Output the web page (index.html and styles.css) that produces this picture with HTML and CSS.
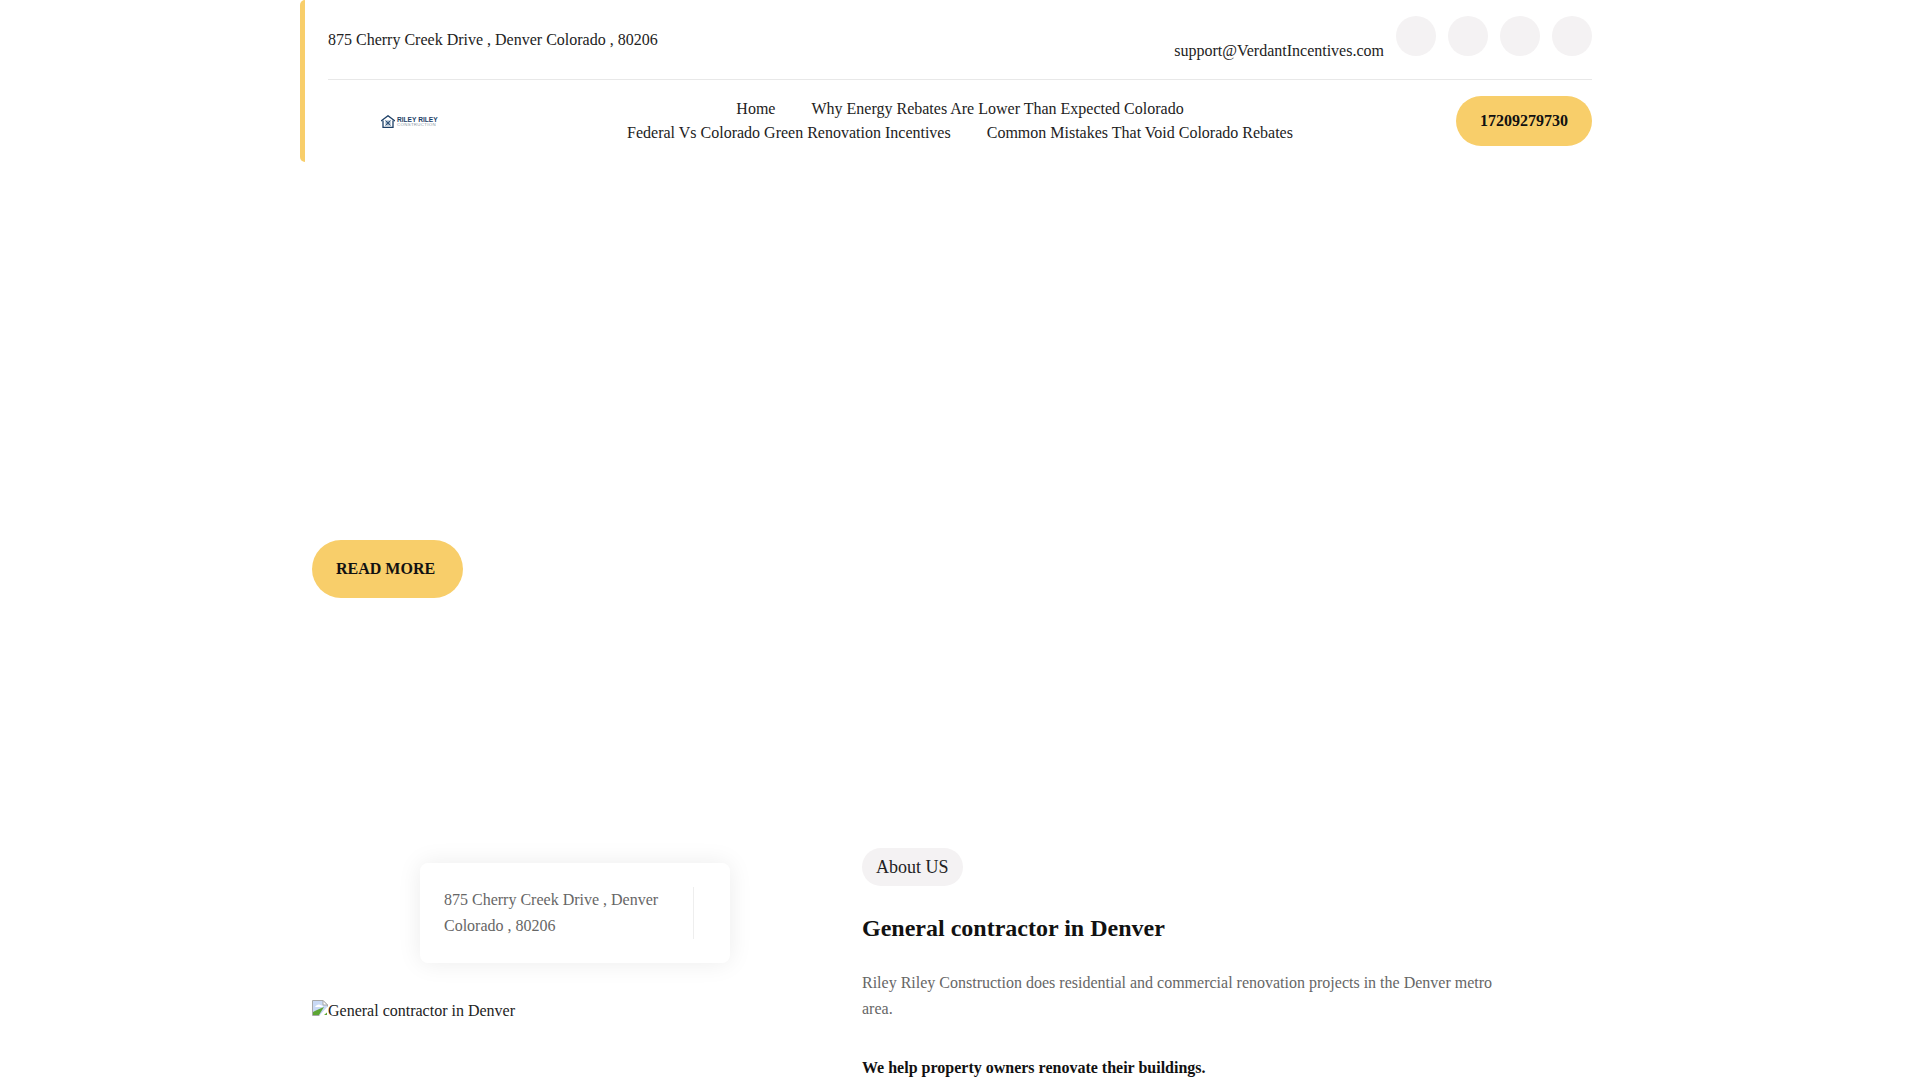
FILE: index.html
```html
<!DOCTYPE html>
<html lang="en">
<head>
  <meta charset="UTF-8">
  <title>Riley Riley Construction</title>
  <link rel="stylesheet" href="styles.css">
</head>
<body>
  <header class="header">
    <div class="topbar">
      <p class="address">875 Cherry Creek Drive , Denver Colorado , 80206</p>
      <div class="contact">
        <a class="email" href="#">support@VerdantIncentives.com</a>
        <span class="social"></span>
        <span class="social"></span>
        <span class="social"></span>
        <span class="social"></span>
      </div>
    </div>
    <div class="mainbar">
      <div class="logo">
        <svg width="14" height="13" viewBox="0 0 14 13"><path d="M0 6 7 .8 14 6" fill="none" stroke="#1c3f66" stroke-width="1.4"/><path d="M2 5.500V12.400H12V5.500" fill="none" stroke="#1c3f66" stroke-width="1.300"/><path d="M4.500 5.500h5v5h-5z" fill="#8fa6bd"/><path d="M4.500 10.500 9.500 5.500M4.500 5.500l5 5" stroke="#1c3f66" stroke-width=".8"/></svg>
        <div class="logo-text"><b>RILEY RILEY</b><span>CONSTRUCTION</span></div>
      </div>
      <nav class="nav">
        <a href="#">Home</a>
        <a href="#">Why Energy Rebates Are Lower Than Expected Colorado</a>
        <a href="#">Federal Vs Colorado Green Renovation Incentives</a>
        <a href="#">Common Mistakes That Void Colorado Rebates</a>
      </nav>
      <a class="phone" href="#">17209279730</a>
    </div>
  </header>

  <section class="hero">
    <a class="read-more" href="#">READ MORE</a>
  </section>

  <section class="about">
    <div class="about-left">
      <div class="address-card">
        <p>875 Cherry Creek Drive , Denver Colorado , 80206</p>
        <span class="card-side"></span>
      </div>
      <div class="broken-img">
        <svg class="broken-icon" width="16" height="16" viewBox="0 0 16 16"><path d="M.5.5h10.500l4.500 4.500v10.500H.500z" fill="#c9d9f5" stroke="#a8a8a8"/><path d="M11 .5v4.500h4.500z" fill="#fff" stroke="#a8a8a8"/><path d="M3 7c1-2 4-3 5-2 2 0 3 1 3 2z" fill="#fff"/><path d="M1 15v-3c3-2 7-3 11-5l-5 8z" fill="#5da633"/><path d="M7 16 16 6v10z" fill="#fff"/><path d="M12 15l3-2.500V15z" fill="#5da633"/></svg>
        <span>General contractor in Denver</span>
      </div>
    </div>
    <div class="about-right">
      <span class="tag">About US</span>
      <h2>General contractor in Denver</h2>
      <p class="lead">Riley Riley Construction does residential and commercial renovation projects in the Denver metro area.</p>
      <p class="strong">We help property owners renovate their buildings.</p>
    </div>
  </section>
</body>
</html>
```

FILE: styles.css
```css
html, body { margin: 0; height: 1080px; overflow: hidden; }
body { font-family: "Liberation Serif", "Times New Roman", serif; font-size: 16px; color: #222; background: #fff; }
p { margin: 0; }
a { color: inherit; text-decoration: none; }

.header { width: 1264px; height: 162px; margin-left: 300px; padding-left: 23px; border-left: 5px solid #f8ce6a; border-radius: 5px; }
.topbar { display: flex; justify-content: space-between; height: 79px; border-bottom: 1px solid #e8e8e8; }
.address { padding-top: 30px; line-height: 20px; }
.contact { display: flex; align-items: flex-start; gap: 12px; padding-top: 16px; }
.email { padding-top: 25px; line-height: 20px; }
.social { width: 40px; height: 40px; border-radius: 50%; background: #f4f2f3; }

.mainbar { display: flex; align-items: center; height: 82px; }
.logo { display: flex; align-items: center; gap: 2px; width: 282px; padding-left: 53px; box-sizing: border-box; }
.logo-text { display: flex; flex-direction: column; font-family: "Liberation Sans", Arial, sans-serif; color: #1c3f66; font-size: 6.6px; line-height: 7px; }
.logo-text span { font-size: 4.400px; line-height: 4px; letter-spacing: .3px; color: #8a97a6; }
.nav { width: 700px; display: flex; flex-wrap: wrap; justify-content: center; gap: 4px 36px; line-height: 20px; }
.phone { margin-left: auto; padding: 0 24px; height: 50px; line-height: 50px; border-radius: 25px; background: #f8ce6a; color: #111; font-weight: bold; }

.hero { height: 306px; margin-left: 312px; padding-top: 378px; }
.read-more { display: inline-block; height: 58px; line-height: 58px; padding: 0 28px 0 24px; border-radius: 29px; background: #f8ce6a; color: #111; font-weight: bold; }

.about { display: flex; margin-left: 312px; padding-top: 2px; }
.about-left { width: 550px; }
.address-card { display: flex; align-items: center; width: 310px; height: 100px; margin: 15px 0 0 108px; padding-left: 24px; box-sizing: border-box; background: #fff; border-radius: 8px; box-shadow: 0 0 25px rgba(0,0,0,0.08); color: #666; line-height: 26px; }
.address-card p { width: 226px; }
.card-side { width: 1px; height: 52px; margin-left: 23px; background: #eee; }
.broken-img { display: flex; align-items: center; margin-top: 36px; height: 24px; }
.broken-icon { align-self: flex-start; margin-top: 1px; }
.about-right { width: 650px; }
.tag { display: inline-block; padding: 0 14px; height: 38px; line-height: 38px; border-radius: 19px; background: #f4f2f3; font-size: 18px; }
h2 { margin: 28px 0 0; font-size: 24px; line-height: 28px; color: #111; }
.lead { margin-top: 28px; color: #666; line-height: 26px; }
.strong { margin-top: 33px; font-weight: bold; line-height: 26px; color: #111; }
```
